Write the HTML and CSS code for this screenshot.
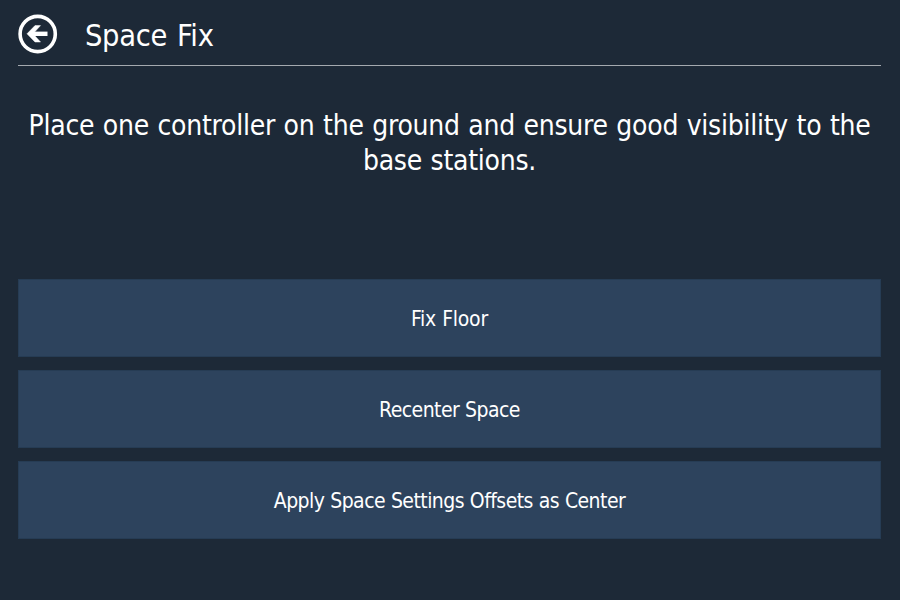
FILE: index.html
```html
<!DOCTYPE html>
<html lang="en">
<head>
<meta charset="utf-8">
<title>Space Fix</title>
<link rel="stylesheet" href="styles.css">
</head>
<body>
<main class="page">
  <header class="header">
    <button class="back" aria-label="Back">
      <svg viewBox="0 0 40 40" width="40" height="40" fill="none" stroke="#fff">
        <circle cx="19.7" cy="20" r="17.6" stroke-width="3.6"/>
        <path d="M29.5 19.8H13" stroke-width="4.4"/>
        <path d="M9 19.8L17 11.6H22.5L15 19.8L22.5 28H17Z" fill="#fff" stroke="#fff" stroke-width="0.5"/>
      </svg>
    </button>
    <h1 class="title">Space Fix</h1>
  </header>
  <p class="message">Place one controller on the ground and ensure good visibility to the<br>base stations.</p>
  <div class="actions">
    <button class="action short">Fix Floor</button>
    <button class="action">Recenter Space</button>
    <button class="action">Apply Space Settings Offsets as Center</button>
  </div>
</main>
</body>
</html>
```
FILE: styles.css
```css
* { box-sizing: border-box; }
body { margin: 0; background: #1d2937; color: #fff; font-family: "DejaVu Sans Condensed", "DejaVu Sans", sans-serif; font-stretch: condensed; }
.page { height: 600px; padding: 0 19px 0 18px; }
.header { display: flex; align-items: center; gap: 28px; height: 66px; padding-top: 2px; border-bottom: 1px solid #a4a9af; }
.back { width: 39px; height: 40px; padding: 0; border: 0; background: none; }
.back svg { display: block; }
.title { margin: 4px 0 0; font-size: 30.5px; font-weight: 400; letter-spacing: -0.3px; word-spacing: 1.5px; }
.message { height: 213px; margin: 0; padding-top: 42px; font-size: 28px; line-height: 35px; letter-spacing: -0.25px; word-spacing: 0.8px; text-align: center; white-space: nowrap; }
.actions { display: grid; gap: 13px; }
.action { height: 78px; padding: 2px 0 0; border: 1px solid #263c54; background: #2d435d; color: #fff; font: inherit; font-size: 21px; letter-spacing: -0.55px; word-spacing: 0.4px; }
.short { letter-spacing: -0.25px; }
```
